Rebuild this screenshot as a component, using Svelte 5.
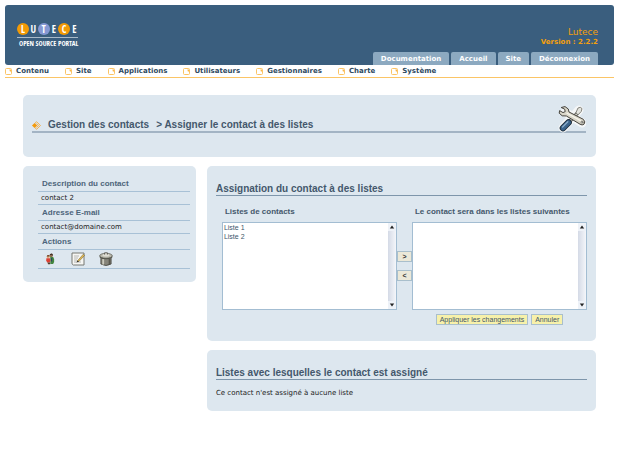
<script>
  const tabs = ['Documentation', 'Accueil', 'Site', 'Déconnexion'];
  const menu = ['Contenu', 'Site', 'Applications', 'Utilisateurs', 'Gestionnaires', 'Charte', 'Système'];
  const available = ['Liste 1', 'Liste 2'];
</script>

{#snippet scrollbar()}
  <span class="scrollbar" aria-hidden="true">
    <svg viewBox="0 0 8 8"><path d="M1.8 5.4 4 2.4 6.2 5.4z" /></svg>
    <svg viewBox="0 0 8 8"><path d="M1.8 2.6 4 5.6 6.2 2.6z" /></svg>
  </span>
{/snippet}

<div class="page">
  <header>
    <div class="logo">
      <div class="letters">
        <span class="disc orange">L</span><span>U</span><span class="disc violet">T</span><span>E</span><span class="disc orange">C</span><span>E</span>
      </div>
      <div class="tagline">OPEN SOURCE PORTAL</div>
    </div>
    <div class="side">
      <div class="product">Lutece</div>
      <div class="version">Version : 2.2.2</div>
      <nav class="tabs">
        {#each tabs as tab}
          <a href="#top">{tab}</a>
        {/each}
      </nav>
    </div>
  </header>

  <nav class="menu">
    {#each menu as item}
      <a href="#top">
        <svg viewBox="0 0 7 7" width="7" height="7">
          <rect x=".5" y=".5" width="6" height="6" rx="1" fill="#fff" stroke="#fbc465" />
          <path d="M4.4 1.6H6v2H4.9z" fill="#fbb545" />
        </svg>{item}
      </a>
    {/each}
  </nav>

  <main>
    <section class="panel banner">
      <h1>
        <svg class="arrow" viewBox="0 0 9 9" width="9" height="9">
          <path d="M0 4.5 2.6 2 5.2 4.5 2.6 7z" fill="#f39a0c" />
          <path d="M3 2.2 4.6.7 8.4 4.5 4.6 8.3 3 6.8M4.4 2.5 6.4 4.5 4.4 6.5" fill="none" stroke="#f5a93a" stroke-width=".9" />
        </svg>
        <a href="#top">Gestion des contacts</a>
        <span>&gt; Assigner le contact à des listes</span>
        <svg class="tools" viewBox="0 0 28 28" width="28" height="28">
          <g fill="none" stroke-linecap="round" stroke-linejoin="round">
            <path d="M5 23 21 5M7 7 24 18" stroke="#f5f7f8" stroke-width="9" />
            <path d="M12 16 19 8.5" stroke="#5c5b55" stroke-width="3.4" />
            <path d="M12 16 19 8.5" stroke="#cfcfc8" stroke-width="1.8" />
            <path d="M18 7.5 20 3 22.3 2.3 24 3.6 23.2 6.5 20.3 9.6z" fill="#e4e5e0" stroke="#77766e" stroke-width=".9" />
            <path d="M5 23 10.5 17.5" stroke="#1c2b39" stroke-width="6.6" />
            <path d="M5 23 10.5 17.5" stroke="#3a638b" stroke-width="4.8" />
            <path d="M4.6 22 9.8 16.8" stroke="#8badca" stroke-width="1.3" />
            <path d="M3.6 2.4 7 1.6 10.3 4 11 7 25.3 14.3Q28 17 26 19.2 24.2 20.7 22 19.2L8.4 11 4.2 10.8 1.2 8.2 1.6 5.6 5 7.6 7.2 6.6 6.8 4.6z" fill="#d9d6c9" stroke="#45433d" />
            <path d="M9 8.2 22.5 15.6" stroke="#f8f6ec" stroke-width="1.3" />
            <circle cx="24" cy="17.2" r="1" fill="#f5f7f8" stroke="#45433d" stroke-width=".6" />
          </g>
        </svg>
      </h1>
    </section>

    <div class="columns">
      <aside class="panel">
        <dl>
          <dt>Description du contact</dt>
          <dd>contact 2</dd>
          <dt>Adresse E-mail</dt>
          <dd>contact@domaine.com</dd>
          <dt>Actions</dt>
          <dd class="actions">
            <button type="button" aria-label="Assigner">
              <svg viewBox="0 0 14 14" width="14" height="14">
                <circle cx="8.2" cy="3.5" r="1.7" fill="#8b6a4c" />
                <path d="M6.7 3.3Q7 1.5 8.6 1.6 10 1.8 9.8 3.4L8.3 2.7z" fill="#3b2a20" />
                <path d="M7.2 5h3l.9 2v3l-1 2H7.4z" fill="#43863f" />
                <path d="M8.6 6v3.5" stroke="#283c68" />
                <circle cx="5.2" cy="4.8" r="1.5" fill="#e2aa7c" />
                <path d="M3.7 4.5Q4 3 5.4 3.1 6.8 3.4 6.6 4.6z" fill="#6b3f22" />
                <path d="M3.4 6.2h3.5l.5 2.2-.7 2H4.1L3.2 8.6z" fill="#dc4033" />
                <path d="M4.6 10.4h2.6v1.9H5z" fill="#51412f" />
              </svg>
            </button>
            <button type="button" aria-label="Modifier">
              <svg viewBox="0 0 14 14" width="14" height="14">
                <path d="M1 1h12v12H2.3L1 11.8z" fill="#f6f6f3" stroke="#777872" />
                <path d="M3 4h5M3 6h4M3 8h3M3 10h7" stroke="#a7a8a3" stroke-width=".8" />
                <path d="M6.5 8.8 12.3 2.2 13.6 3.4 7.8 9.6z" fill="#e3ba52" stroke="#69592f" stroke-width=".5" />
                <path d="M5.5 10.5 6.5 8.5 8 9.6z" fill="#292723" />
              </svg>
            </button>
            <button type="button" aria-label="Supprimer">
              <svg viewBox="0 0 14 14" width="14" height="14">
                <path d="M1.9 4.5V12Q7 15 12.1 12V4.5z" fill="#85847a" stroke="#3e3d36" stroke-width=".8" />
                <path d="M4.2 7v5.6" stroke="#cbcabd" stroke-width="1.8" />
                <path d="M10.5 7v5.2" stroke="#59584f" stroke-width="1.6" />
                <path d="M.7 3.8v1.6Q7 9.2 13.3 5.4V3.8z" fill="#55544b" />
                <ellipse cx="7" cy="3.8" rx="6.3" ry="2.5" fill="#b9b8ac" stroke="#55544b" stroke-width=".7" />
                <ellipse cx="7" cy="3.2" rx="3.6" ry="1.3" fill="#deddd3" />
                <path d="M5.6 2.6V.8h2.8v1.8" fill="#e1e0d6" stroke="#4b4a42" stroke-width=".8" />
              </svg>
            </button>
          </dd>
        </dl>
      </aside>

      <div class="content">
        <section class="panel">
          <h2>Assignation du contact à des listes</h2>
          <form>
            <div class="col">
              <label for="available">Listes de contacts</label>
              <div class="listbox">
                <select id="available" multiple size="9">
                  {#each available as name}
                    <option>{name}</option>
                  {/each}
                </select>
                {@render scrollbar()}
              </div>
            </div>
            <div class="moves">
              <button type="button">&gt;</button>
              <button type="button">&lt;</button>
            </div>
            <div class="col">
              <label for="assigned">Le contact sera dans les listes suivantes</label>
              <div class="listbox">
                <select id="assigned" multiple size="9"></select>
                {@render scrollbar()}
              </div>
              <div class="submit">
                <button type="button">Appliquer les changements</button>
                <button type="button">Annuler</button>
              </div>
            </div>
          </form>
        </section>

        <section class="panel">
          <h2>Listes avec lesquelles le contact est assigné</h2>
          <p>Ce contact n'est assigné à aucune liste</p>
        </section>
      </div>
    </div>
  </main>
</div>

<style>
  :global(body) {
    margin: 0;
    background: #fff;
  }
  .page {
    padding: 5px;
    font: 7px/12px 'DejaVu Sans', Verdana, sans-serif;
    color: #222;
  }
  .page * {
    box-sizing: border-box;
  }
  a {
    color: inherit;
    text-decoration: none;
  }
  svg {
    display: block;
    flex: none;
  }
  header {
    display: flex;
    justify-content: space-between;
    height: 60px;
    padding: 0 16px 0 12px;
    border-radius: 3px;
    background: #3a5e7e;
  }
  .logo {
    padding-top: 18px;
    color: #fff;
    font-family: 'Open Sans Condensed', 'Open Sans', sans-serif;
  }
  .letters {
    display: flex;
    justify-content: space-between;
    border-bottom: 1px solid #a9bac9;
    padding-bottom: 2px;
    font-size: 10px;
    font-weight: bold;
  }
  .letters span {
    width: 8px;
    text-align: center;
  }
  .letters .disc {
    width: 12px;
    border-radius: 50%;
  }
  .orange {
    background: #f29a05;
  }
  .violet {
    background: #8598d3;
  }
  .tagline {
    padding-left: 2px;
    font-size: 7px;
  }
  .side {
    display: flex;
    flex-direction: column;
    padding-top: 22px;
    text-align: right;
    color: #f5a00c;
  }
  .product {
    font-size: 9px;
    line-height: 10px;
  }
  .version {
    font-weight: bold;
    line-height: 10px;
  }
  .tabs {
    display: flex;
    gap: 2px;
    margin-top: auto;
  }
  .tabs a {
    padding: 1px 8px 0;
    border-radius: 2px 2px 0 0;
    background: #8ca9c0;
    color: #fff;
    font-weight: bold;
  }
  .menu {
    display: flex;
    gap: 16px;
    border-bottom: 1px solid #fbc566;
    color: #2f4a61;
    font-weight: bold;
  }
  .menu a {
    display: flex;
    align-items: center;
    gap: 4px;
  }
  main {
    padding: 17px 18px 0;
  }
  .panel {
    border-radius: 5px;
    background: #dde7ef;
  }
  h1,
  h2 {
    margin: 0;
    font: bold 10px/12px 'Liberation Sans', Arial, sans-serif;
    color: #44586c;
  }
  .banner {
    padding: 24px 10px 24px 9px;
  }
  h1 {
    position: relative;
    display: flex;
    align-items: center;
    gap: 7px;
    border-bottom: 2px solid #a3b4c4;
  }
  .tools {
    position: absolute;
    right: 0;
    bottom: -2px;
  }
  .columns {
    display: grid;
    grid-template-columns: 4fr 9fr;
    align-items: start;
    gap: 11px;
    margin-top: 9px;
  }
  aside {
    padding: 10px 6px 13px 15px;
  }
  .content {
    display: flex;
    flex-direction: column;
    gap: 9px;
  }
  dl,
  dd {
    margin: 0;
  }
  dt,
  dd {
    border-bottom: 1px solid #a8c1d6;
  }
  dt {
    padding: 2px 4px 1px;
    font: bold 8px/12px 'Liberation Sans', Arial, sans-serif;
    color: #4d657b;
  }
  dd {
    padding-left: 3px;
  }
  .actions {
    display: flex;
    gap: 14px;
    padding: 2px 5px;
  }
  .actions button {
    padding: 0;
    border: 0;
    background: none;
  }
  .content .panel {
    padding: 17px 9px 12px;
  }
  h2 {
    border-bottom: 1px solid #7e96ab;
  }
  form {
    display: flex;
    padding: 10px 0 4px 6px;
  }
  .col {
    flex: 1;
    min-width: 0;
  }
  label {
    display: block;
    padding: 0 3px 4px;
    font: bold 8px/12px 'Liberation Sans', Arial, sans-serif;
    color: #44586c;
  }
  .listbox {
    display: flex;
    height: 88px;
    border: 1px solid #a3bdd2;
    background: #fff;
  }
  select {
    flex: 1;
    min-width: 0;
    padding: 1px 0;
    border: 0;
    outline: 0;
    overflow: hidden;
    background: none;
    color: #40566b;
    font: 7px/9px 'Liberation Sans', Arial, sans-serif;
  }
  option {
    min-height: 9px;
    padding: 0 1px;
  }
  .scrollbar {
    display: flex;
    flex-direction: column;
    justify-content: space-between;
    width: 8px;
    background: linear-gradient(90deg, #d4dae6, #f4f6fa);
  }
  .scrollbar svg {
    width: 8px;
    height: 8px;
    background: #eef2f8;
    fill: #222;
  }
  .moves {
    display: flex;
    flex-direction: column;
    gap: 8px;
    padding-top: 45px;
  }
  form button {
    height: 11px;
    padding: 0 3px;
    border: 1px solid #a9bfcc;
    background: #ebe8d8;
    color: #333;
    font: bold 7px/9px 'Liberation Sans', Arial, sans-serif;
  }
  .moves button {
    width: 15px;
  }
  .submit {
    display: flex;
    justify-content: center;
    gap: 3px;
    margin-top: 4px;
  }
  .submit button {
    background: #f7f1aa;
    color: #40566b;
    font-weight: normal;
  }
  p {
    margin: 7px 0 0;
  }
</style>
